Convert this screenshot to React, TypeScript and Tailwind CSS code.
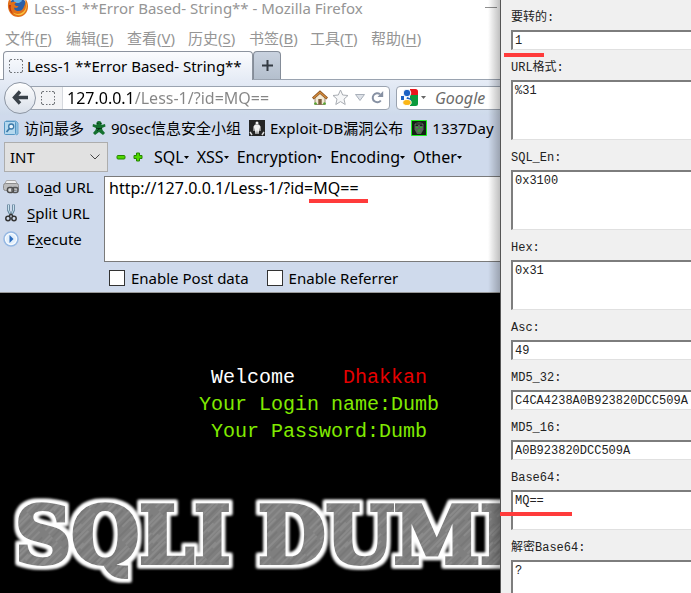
import type { ReactNode } from "react";

const UI = "font-['Noto_Sans','Noto_Sans_CJK_SC',sans-serif]";
const MONO = "font-['Liberation_Mono','Noto_Sans_CJK_SC',monospace]";

const menus: [string, string][] = [
  ["文件", "F"],
  ["编辑", "E"],
  ["查看", "V"],
  ["历史", "S"],
  ["书签", "B"],
  ["工具", "T"],
  ["帮助", "H"],
];

function FirefoxIcon() {
  return (
    <svg width="22" height="22" viewBox="0 0 22 22" className="shrink-0" aria-hidden="true">
      <circle cx="11" cy="10.500" r="9" fill="#2b5fa8" />
      <path d="M6 3c3-2 8-1 9 2l-3 2-4 0z" fill="#69b4e8" />
      <path
        d="M1.500 5C0 10 1 18 8 20.500c7 2 13-3 13-10 0-3-1-6-3-8 1 4 0 6-1 8-1 4-5 5.500-8 4-2-1-2-2-1.500-3 2 1 3 0 4-1-1-1-3 0-4-2 0-1 1-1.500 2-2-2-1-4-1-5 0C3.500 5.500 3.500 4 3.500 2.500 2.500 3 2 4 1.500 5z"
        fill="#e2701a"
      />
      <path d="M18 4c2 5 1 10-2 12-3 2.500-7 2.500-10 .5 2 3 7 3.500 10 1.500 4-3 5-9 2-14z" fill="#f9c440" />
      <path d="M2 9c0 4 1 7 4 9-2-3-3-6-2-9z" fill="#b8330f" />
    </svg>
  );
}

function DashedBox() {
  return (
    <svg width="14" height="14" viewBox="0 0 14 14" className="shrink-0" aria-hidden="true">
      <path
        d="M.5 3V2Q.5.5 2 .5h1M5 .5h1.500M8 .5h1.500M11 .5h1q1.500 0 1.500 1.500v1M13.500 5v1.500M13.500 8v1.500M13.500 11v1q0 1.500-1.500 1.500h-1M9.500 13.500H8M6.500 13.500H5M3 13.500H2Q.5 13.500.5 12v-1M.5 9.500V8M.5 6.500V5"
        fill="none"
        stroke="#6f7277"
      />
    </svg>
  );
}

function HomeIcon() {
  return (
    <svg width="16" height="16" viewBox="0 0 16 16" aria-hidden="true">
      <path d="M3 8v6.500h10V8L8 3.500z" fill="#f4ead4" stroke="#9a8b72" />
      <path d="M.8 8.500 8 2l7.200 6.500" fill="none" stroke="#8a5420" strokeWidth="2.600" />
      <path d="M1.500 8 8 2.200 14.500 8" fill="none" stroke="#d98d3c" strokeWidth="1.200" />
      <path d="M6.300 9h3.400v5.500H6.300z" fill="#7d5c3d" />
      <path d="M2 14.500c0-3 3-3 3 0zM11 14.500c0-3 3-3 3 0z" fill="#54a832" />
    </svg>
  );
}

function StarIcon() {
  return (
    <svg width="17" height="17" viewBox="0 0 17 17" aria-hidden="true">
      <path d="m8.500 1 2.200 5 5.300.5-4 3.600 1.200 5.400-4.700-2.900-4.700 2.900L5 10.100 1 6.500 6.300 6z" fill="#f6f7f8" stroke="#a9adb3" />
    </svg>
  );
}

function ReloadIcon() {
  return (
    <svg width="13" height="13" viewBox="0 0 13 13" aria-hidden="true">
      <path d="M9.800 9.500A4.500 4.500 0 1 1 9 3.200" fill="none" stroke="#8791a3" strokeWidth="2" />
      <path d="M12.200 0v6H6.500z" fill="#8791a3" />
    </svg>
  );
}

function GoogleIcon() {
  return (
    <svg width="17" height="17" viewBox="0 0 17 17" aria-hidden="true">
      <path d="M9 0h5.500Q17 0 17 2.500V6H9z" fill="#e8151b" />
      <path d="M9 6h8v8.500q0 2.500-2.500 2.500H9z" fill="#0a9a3c" />
      <path d="M0 7h3v4H0z" fill="#1b62c4" />
      <ellipse cx="6" cy="4" rx="3.800" ry="3.800" fill="#1b62c4" stroke="#fff" />
      <path d="M6 8q5 1 4 4H5z" fill="#1b62c4" />
      <ellipse cx="6" cy="13.500" rx="4.200" ry="3" fill="#fbb616" stroke="#fff" />
    </svg>
  );
}

function MostVisitedIcon() {
  return (
    <svg width="15" height="16" viewBox="0 0 15 16" aria-hidden="true">
      <path d="M2 1h10l2 2v11l-2 1" fill="#8fc1e2" stroke="#6ea9d0" />
      <rect x=".5" y="1.500" width="11" height="13" rx="1" fill="#b5d8ee" stroke="#5596c4" />
      <circle cx="7.200" cy="6.500" r="2.500" fill="#e8f4fc" stroke="#3a78a8" strokeWidth="1.300" />
      <path d="m5.500 8.500-3 3.500" stroke="#3a78a8" strokeWidth="1.800" />
    </svg>
  );
}

function StarManIcon() {
  return (
    <svg width="14" height="16" viewBox="0 0 14 16" aria-hidden="true">
      <path d="M7 1c2 0 3 1.500 2.500 4L13 4l.5 2.500L10 8l.5 2 2.500 3-2 2-4-3-4 3-2-2 2.500-3L4 8 .5 6.500 1 4l3.500 1C4 2.500 5 1 7 1z" fill="#14702f" />
      <path d="M5 3.500h1.500M8 3.500h1.500M4 8l3 1 3-1M5 11l2-2" stroke="#073c16" />
    </svg>
  );
}

function ExploitIcon() {
  return (
    <svg width="16" height="16" viewBox="0 0 16 16" aria-hidden="true">
      <path d="M0 0h16v16H0z" fill="#252525" />
      <circle cx="8" cy="3" r="1.500" fill="#f2f2f2" />
      <path d="M6 4.500h4l1.500 2V11h-1V7.500L9.500 14h-1L8 10l-.5 4h-1l-1-6.500V11h-1V6.500z" fill="#f2f2f2" />
      <path d="M1 12l2 3M15 12l-2 3" stroke="#ddd" strokeWidth="1.500" />
    </svg>
  );
}

function SkullIcon() {
  return (
    <svg width="16" height="16" viewBox="0 0 16 16" aria-hidden="true">
      <path d="M.5.5h15v15H.5z" fill="#142114" stroke="#1fef1f" />
      <path d="M3.500 4.500C5 1.500 11 1.500 12.500 4.500v5L10 14H6l-2.500-4.500z" fill="#5a605a" />
      <path d="M4.500 5.500h2.500M9 5.500h2.500M5 4h6" stroke="#1b1f1b" />
      <path d="M5 7.500h2M9 7.500h2M6.500 11h3M7.500 9.500h1" stroke="#20c020" />
    </svg>
  );
}

function LoadIcon() {
  return (
    <svg width="16" height="16" viewBox="0 0 16 16" aria-hidden="true">
      <path d="M3.500 1.500h9l2 4h-13z" fill="#eee" stroke="#aaa" />
      <rect x=".5" y="4.500" width="15" height="7" rx="2" fill="#bdbdbd" stroke="#8d8d8d" />
      <rect x="4.500" y="8.500" width="6" height="5" rx="2" fill="#ddd" stroke="#4c4c4c" strokeWidth="1.500" />
      <rect x="9" y="8.500" width="6" height="5" rx="2" fill="none" stroke="#555" strokeWidth="1.500" />
    </svg>
  );
}

function ScissorsIcon() {
  return (
    <svg width="16" height="18" viewBox="0 0 16 18" aria-hidden="true">
      <path d="M5.500.5v6l2 4M10.500.5v6l-2 4" fill="none" stroke="#5c7e96" strokeWidth="2.600" />
      <path d="M5.500 1v5l2 4M10.500 1v5l-2 4" fill="none" stroke="#c9e2ef" />
      <circle cx="5" cy="14.500" r="2.200" fill="none" stroke="#333" strokeWidth="1.500" />
      <circle cx="11" cy="14.500" r="2.200" fill="none" stroke="#333" strokeWidth="1.500" />
      <path d="m6 12 2-2 2 2" fill="none" stroke="#333" strokeWidth="1.500" />
    </svg>
  );
}

function ExecuteIcon() {
  return (
    <svg width="16" height="16" viewBox="0 0 16 16" aria-hidden="true">
      <circle cx="8" cy="8" r="7" fill="#f7fbff" stroke="#95b8e3" strokeWidth="1.500" />
      <circle cx="8" cy="8" r="5" fill="#e3effb" />
      <path d="m6.500 4 4 4-4 4z" fill="#2d6ec0" />
    </svg>
  );
}

function Caret() {
  return (
    <svg width="5" height="3" viewBox="0 0 5 3" aria-hidden="true">
      <path d="M0 0h5L2.500 3z" fill="currentColor" />
    </svg>
  );
}

function Bookmark({ icon, children }: { icon: ReactNode; children: ReactNode }) {
  return (
    <a href="#" className="flex shrink-0 items-center gap-[5px] whitespace-nowrap">
      {icon}
      {children}
    </a>
  );
}

function HackAction({ icon, before, accel, after }: { icon: ReactNode; before: string; accel: string; after: string }) {
  return (
    <button type="button" className="flex h-[26px] items-center gap-2 whitespace-nowrap">
      {icon}
      <span>
        {before}
        <span className="underline underline-offset-2">{accel}</span>
        {after}
      </span>
    </button>
  );
}

function Browser() {
  return (
    <main className={`${UI} relative flex min-w-0 flex-1 flex-col overflow-hidden bg-white text-[15px] leading-5 text-black`}>
      <header className="flex h-[51px] flex-col text-[#959595]">
        <div className="flex h-[26px] items-start gap-[5px] pl-[7px]">
          <div className="-mt-1">
            <FirefoxIcon />
          </div>
          <h1 className="leading-4 whitespace-nowrap">Less-1 **Error Based- String** - Mozilla Firefox</h1>
          <button type="button" aria-label="最小化" className="mt-[7px] mr-[3px] ml-auto h-px w-3 bg-[#8f8f8f]" />
        </div>
        <nav className="flex h-6 items-center gap-[13px] pl-[5px]">
          {menus.map(([name, key]) => (
            <button type="button" key={key} className="w-12 text-left whitespace-nowrap">
              {name}(<span className="underline underline-offset-2">{key}</span>)
            </button>
          ))}
        </nav>
      </header>

      <div className="flex h-[29px] items-end border-b border-[#9aa3b0] pl-[3px]">
        <button
          type="button"
          className="-mb-px flex h-[29px] w-[250px] items-center gap-1 rounded-t border border-b-0 border-[#8d949f] bg-gradient-to-b from-[#fbfcfe] to-[#e5ebf5] pl-[5px] whitespace-nowrap"
        >
          <DashedBox />
          Less-1 **Error Based- String**
        </button>
        <button
          type="button"
          aria-label="打开新标签页"
          className="flex h-[28px] w-7 items-center justify-center rounded-t border border-b-0 border-[#848c98] bg-gradient-to-b from-[#c9d2df] to-[#b4bfcd]"
        >
          <svg width="11" height="11" viewBox="0 0 11 11">
            <path d="M5.500 0v11M0 5.500h11" stroke="#343b43" strokeWidth="2" />
          </svg>
        </button>
      </div>

      <div className="flex h-[35px] shrink-0 items-center bg-gradient-to-b from-[#e6ecf6] to-[#cedaeb] pl-1">
        <button
          type="button"
          aria-label="后退"
          className="z-10 -mr-4 flex h-8 w-8 shrink-0 items-center justify-center rounded-full border border-[#8d96a3] bg-gradient-to-b from-white to-[#d8dfe9]"
        >
          <svg width="16" height="15" viewBox="0 0 16 15">
            <path d="M8 1.500 2.500 7.500l5.500 6M3 7.500h13" fill="none" stroke="#394149" strokeWidth="3.400" />
          </svg>
        </button>
        <div className="flex h-6 w-[370px] shrink-0 items-center rounded border border-[#9aa3b0] bg-white">
          <span className="flex h-full w-[42px] shrink-0 items-center justify-end border-r border-[#d6d9de] bg-[#f2f3f5] pr-[7px]">
            <DashedBox />
          </span>
          <input
            aria-label="地址"
            defaultValue="127.0.0.1/Less-1/?id=MQ=="
            className="h-5 min-w-0 flex-1 bg-[linear-gradient(90deg,#000_70px,#858585_70px)] bg-clip-text pl-1 text-[16px] text-transparent outline-none"
          />
          <div className="flex items-center gap-1 pr-[5px]">
            <button type="button" aria-label="主页">
              <HomeIcon />
            </button>
            <button type="button" aria-label="加入书签">
              <StarIcon />
            </button>
            <button type="button" aria-label="历史记录" className="px-[2px]">
              <svg width="10" height="7" viewBox="0 0 10 7">
                <path d="M.5.5h9L5 6.500z" fill="#dde1e7" stroke="#a9b0ba" />
              </svg>
            </button>
            <button type="button" aria-label="刷新">
              <ReloadIcon />
            </button>
          </div>
        </div>
        <div className="-mr-2 ml-[6px] flex h-6 min-w-0 flex-1 items-center gap-[3px] rounded border border-[#9aa3b0] bg-white pl-1 text-[#666]">
          <button type="button" aria-label="搜索引擎" className="flex shrink-0 items-center gap-[3px]">
            <GoogleIcon />
            <Caret />
          </button>
          <input
            aria-label="搜索"
            placeholder="Google"
            className="min-w-0 flex-1 pl-[6px] text-[16px] italic outline-none placeholder:text-[#6b6b6b]"
          />
        </div>
      </div>

      <div className="flex flex-col border-b border-[#9a9a9a] bg-[#cfdaec]">
        <nav className="flex h-[26px] items-center gap-2 pl-1">
          <Bookmark icon={<MostVisitedIcon />}>访问最多</Bookmark>
          <Bookmark icon={<StarManIcon />}>90sec信息安全小组</Bookmark>
          <Bookmark icon={<ExploitIcon />}>Exploit-DB漏洞公布</Bookmark>
          <Bookmark icon={<SkullIcon />}>1337Day</Bookmark>
        </nav>

        <div className="flex h-8 items-center pl-1">
          <div className="relative">
            <select
              aria-label="注入类型"
              className="h-[30px] w-[104px] appearance-none border border-[#adadad] bg-[#e1e1e1] pl-[5px] outline-none"
            >
              <option>INT</option>
            </select>
            <svg width="10" height="6" viewBox="0 0 10 6" className="pointer-events-none absolute top-3 right-2">
              <path d="m.5.5 4.500 4.500L9.500.5" fill="none" stroke="#444" />
            </svg>
          </div>
          <div className="flex items-center gap-[7px] pl-2">
            <button type="button" aria-label="减少">
              <svg width="10" height="10" viewBox="0 0 10 10">
                <rect x="1" y="3.500" width="8" height="3.500" rx="1" fill="#4fd800" stroke="#248500" />
              </svg>
            </button>
            <button type="button" aria-label="增加">
              <svg width="10" height="10" viewBox="0 0 10 10">
                <path d="M3.500 1h3v2.500H9v3H6.500V9h-3V6.500H1v-3h2.500z" fill="#4fd800" stroke="#248500" />
              </svg>
            </button>
          </div>
          <div className="flex items-center gap-2 pl-[11px] text-[16px]">
            {["SQL", "XSS", "Encryption", "Encoding", "Other"].map((name) => (
              <button type="button" key={name} className="flex items-center">
                {name}
                <Caret />
              </button>
            ))}
          </div>
        </div>

        <div className="flex">
          <div className="flex w-[104px] shrink-0 flex-col pt-px pl-[3px]">
            <HackAction icon={<LoadIcon />} before="Lo" accel="a" after="d URL" />
            <HackAction icon={<ScissorsIcon />} before="" accel="S" after="plit URL" />
            <HackAction icon={<ExecuteIcon />} before="E" accel="x" after="ecute" />
          </div>
          <div className="relative min-w-0 flex-1 pt-[3px]">
            <textarea
              aria-label="URL"
              defaultValue="http://127.0.0.1/Less-1/?id=MQ=="
              className="block h-[86px] w-full resize-none border border-r-0 border-[#7a7a7a] bg-white px-1 py-px text-[16px] outline-none"
            />
            <span className="absolute top-[26px] left-[205px] h-1 w-[59px] bg-[#ff3b3b]" />
          </div>
        </div>

        <div className="flex h-[30px] items-center gap-[18px] pt-[2px] pl-[109px]">
          {["Enable Post data", "Enable Referrer"].map((name) => (
            <label key={name} className="flex items-center gap-[6px] whitespace-nowrap">
              <input type="checkbox" className="h-4 w-4 appearance-none border border-[#333] bg-white" />
              {name}
            </label>
          ))}
        </div>
      </div>

      <section className="flex flex-1 flex-col bg-black">
        <div className={`${MONO} pt-[71px] pl-[138px] text-center text-[20px] leading-[27px] whitespace-pre text-[#80ea00]`}>
          <p className="text-white">
            Welcome{"    "}
            <span className="text-[#e60000]">Dhakkan</span>
          </p>
          <p>Your Login name:Dumb</p>
          <p>Your Password:Dumb</p>
        </div>
        <svg height="108" viewBox="0 0 501 108" preserveAspectRatio="xMinYMin slice" className="mt-10 w-full" role="img" aria-label="SQLI DUMB">
          <defs>
            <pattern id="brushed" width="47" height="31" patternUnits="userSpaceOnUse" patternTransform="rotate(-45)">
              <rect width="47" height="31" fill="#7f7f7f" />
              <path d="M0 2h30M12 9h35M0 17h26M20 25h27" stroke="#8b8b8b" strokeWidth="2" />
              <path d="M8 5h32M0 12h22M24 15h20M4 21h34M0 28h24" stroke="#717171" />
              <path d="M0 7h18M26 19h21M10 23h20M14 30h28M30 12h17" stroke="#959595" />
            </pattern>
            <filter id="glow" x="-5%" y="-20%" width="110%" height="140%">
              <feMorphology in="SourceAlpha" operator="dilate" radius="3" result="wide" />
              <feGaussianBlur in="wide" stdDeviation="1.500" result="soft" />
              <feFlood floodColor="#fff" />
              <feComposite in2="soft" operator="in" result="halo" />
              <feMerge>
                <feMergeNode in="halo" />
                <feMergeNode in="halo" />
                <feMergeNode in="SourceGraphic" />
              </feMerge>
            </filter>
          </defs>
          <g
            className="font-['DejaVu_Serif',serif] text-[78px] font-bold"
            fill="url(#brushed)"
            stroke="url(#brushed)"
            strokeWidth="4"
            filter="url(#glow)"
          >
            <text x="15" y="78">SQLI</text>
            <text x="258" y="78">DUMB</text>
          </g>
        </svg>
      </section>

      <div className="pointer-events-none absolute inset-y-0 right-0 w-3 bg-gradient-to-r from-transparent to-black/25" />
    </main>
  );
}

type FieldSpec = { id: string; label: string; value: string; box: string; line?: boolean; mark?: string };

const fields: FieldSpec[] = [
  { id: "source", label: "要转的:", value: "1", box: "h-5", line: true, mark: "-left-[7px] top-[23px] w-10" },
  { id: "url", label: "URL格式:", value: "%31", box: "h-[60px]" },
  { id: "sql", label: "SQL_En:", value: "0x3100", box: "h-[60px]" },
  { id: "hex", label: "Hex:", value: "0x31", box: "h-[50px]" },
  { id: "asc", label: "Asc:", value: "49", box: "h-5", line: true },
  { id: "md5-32", label: "MD5_32:", value: "C4CA4238A0B923820DCC509A", box: "h-5", line: true },
  { id: "md5-16", label: "MD5_16:", value: "A0B923820DCC509A", box: "h-5", line: true },
  { id: "base64", label: "Base64:", value: "MQ==", box: "h-10", mark: "-left-[11px] top-[22px] w-[72px]" },
  { id: "decode", label: "解密Base64:", value: "?", box: "h-[60px]" },
];

function Field({ id, label, value, box, line, mark }: FieldSpec) {
  const style = `${box} block w-full resize-none overflow-hidden border-t-2 border-l-2 border-b border-t-[#7d7d7d] border-l-[#7d7d7d] border-b-[#e0e0e0] bg-white pt-px pl-[2px] text-[#222] outline-none`;
  return (
    <div>
      <label htmlFor={id} className="flex h-[30px] items-center pt-[6px] whitespace-nowrap">
        {label}
      </label>
      <div className="relative">
        {line ? (
          <input id={id} defaultValue={value} className={style} />
        ) : (
          <textarea id={id} defaultValue={value} className={style} />
        )}
        {mark && <span className={`${mark} absolute z-10 h-1 bg-[#ff3b3b]`} />}
      </div>
    </div>
  );
}

export default function App() {
  return (
    <div className="flex h-screen w-full overflow-hidden">
      <Browser />
      <aside className={`${MONO} w-[191px] shrink-0 border-l border-[#555] bg-[#f0f0f0] pl-[10px] text-[12px] leading-4 text-[#222]`}>
        {fields.map((field) => (
          <Field key={field.id} {...field} />
        ))}
      </aside>
    </div>
  );
}
